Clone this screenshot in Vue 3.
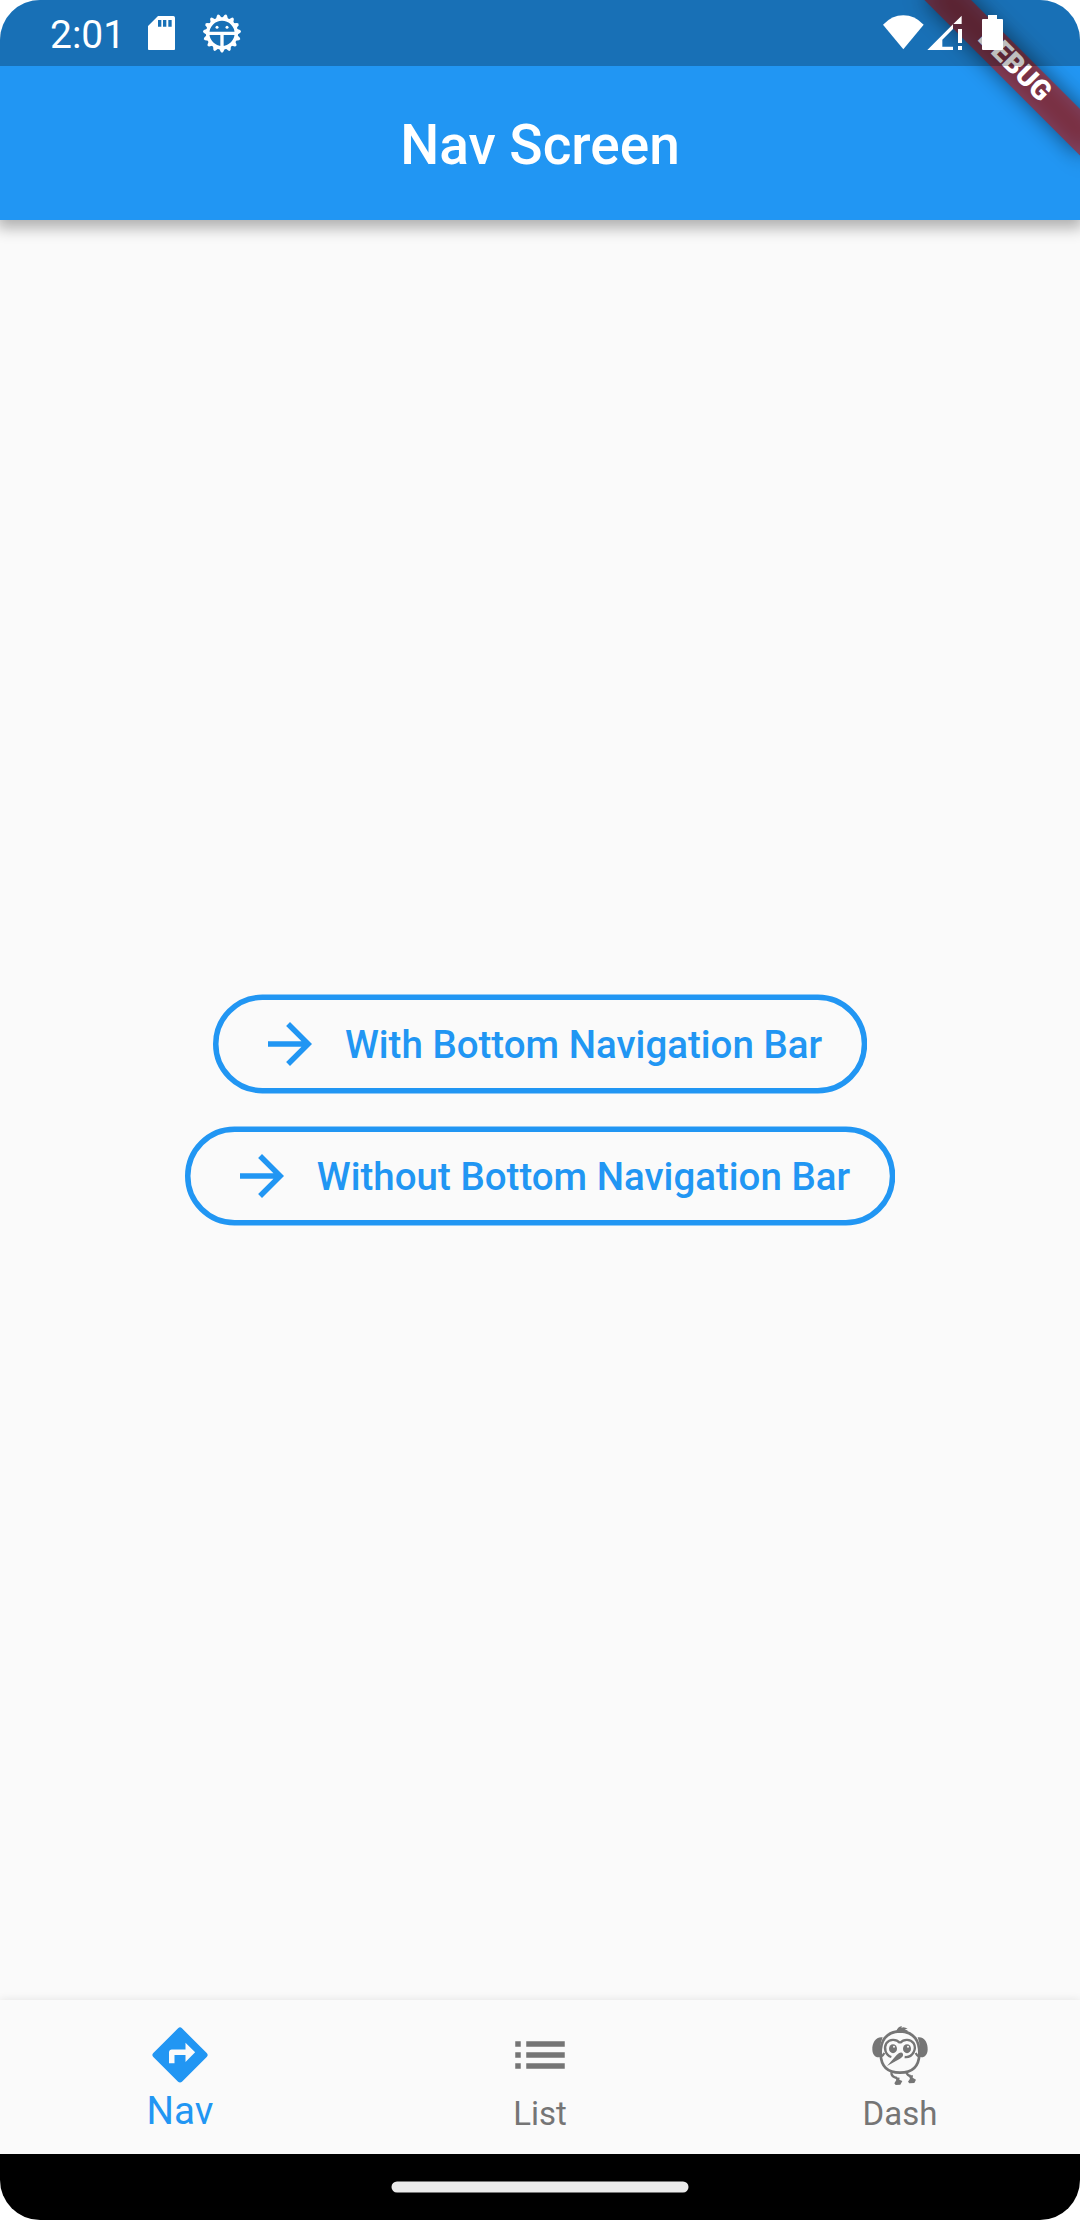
<script setup>
const actions = ['With Bottom Navigation Bar', 'Without Bottom Navigation Bar']
const teeth = Array.from({ length: 15 }, (_, i) => i * 24)
</script>

<template>
  <div class="phone">
    <header class="app-bar">
      <h1>Nav Screen</h1>
    </header>

    <main class="body">
      <button v-for="label in actions" :key="label" class="outlined">
        <svg class="outline"><rect x="2.75" y="3.25" rx="46.75" ry="46.75" /></svg>
        <svg class="arrow" viewBox="0 0 24 24">
          <path d="M12 4l-1.41 1.41L16.17 11H4v2h12.17l-5.58 5.59L12 20l8-8z" />
        </svg>
        <span>{{ label }}</span>
      </button>
    </main>

    <nav class="bottom-nav">
      <div class="item active">
        <svg viewBox="0 0 24 24">
          <path d="M21.71 11.29l-9-9a.996.996 0 0 0-1.41 0l-9 9a.996.996 0 0 0 0 1.41l9 9c.39.39 1.02.39 1.41 0l9-9a.996.996 0 0 0 0-1.41zM14 14.5V12h-4v3H8v-4c0-.55.45-1 1-1h5V7.500l3.500 3.500-3.500 3.500z" />
        </svg>
        <span>Nav</span>
      </div>
      <div class="item">
        <svg viewBox="0 0 24 24">
          <path d="M3 13h2v-2H3v2zm0 4h2v-2H3v2zm0-8h2V7H3v2zm4 4h14v-2H7v2zm0 4h14v-2H7v2zM7 7v2h14V7H7z" />
        </svg>
        <span>List</span>
      </div>
      <div class="item">
        <svg viewBox="51 36 198 198">
          <!-- tuft -->
          <path d="M138 66C142 54 148 49 156 49L154 54Q161 48 173 56L164 58L174 62L162 67Z" />
          <!-- wings -->
          <path d="M98 82C78 79 66 98 67 119C68 137 80 146 92 140C88 121 90 101 98 82Z" />
          <path d="M203 82C223 79 234 98 233 119C232 137 220 146 208 140C212 121 210 101 203 82Z" />
          <!-- head and body -->
          <path class="line" d="M92 132C91 95 106 65 150 64C194 65 209 95 208 132C207 168 188 188 150 188C113 188 93 168 92 132Z" />
          <path class="line thin" d="M95 138Q99 137 103 129M205 138Q201 137 197 129" />
          <path class="line thin" d="M150 99C138 86 119 87 109 100C100 115 107 136 124 141M150 99C162 86 181 87 191 100C200 115 190 144 164 141" />
          <ellipse cx="129" cy="116" rx="12" ry="13.500" />
          <ellipse cx="171" cy="116" rx="12" ry="13.500" />
          <circle cx="132" cy="110" r="3" class="glint" />
          <circle cx="174" cy="110" r="3" class="glint" />
          <!-- beak -->
          <path d="M111 168L140 135Q154 122 159 132Q161 140 150 146Z" />
          <!-- legs -->
          <path class="line thin" d="M124 187Q124 202 141 204M168 185Q172 197 182 198" />
          <path d="M135 201L149 203L148 209L157 213L151 224L137 225L133 220L139 210Z" />
          <path d="M175 196L189 196L188 203L198 209L193 219L178 220L174 215L180 206Z" />
        </svg>
        <span>Dash</span>
      </div>
    </nav>

    <footer class="gesture-bar">
      <svg width="298" height="12" viewBox="0 0 298 12">
        <rect x=".5" y=".5" width="297" height="11" rx="5.500" fill="#ebebeb" />
      </svg>
    </footer>

    <div class="ribbon">
      <div class="ribbon-shadow"></div>
      <div class="ribbon-band">DEBUG</div>
    </div>

    <div class="status-bar">
      <span class="time">2:01</span>
      <svg class="sd" viewBox="444 48 81 104">
        <path fill-rule="evenodd" d="M474 48H520Q525 48 525 53V146Q525 151 520 151H449Q444 151 444 146V78ZM474 60V80H484V60ZM489 60V80H499V60ZM505 60V80H515V60Z" />
      </svg>
      <svg class="gear" viewBox="607 39 120 120">
        <path v-for="a in teeth" :key="a" d="M658 145L663 155Q667 160 671 155L676 145Z" :transform="`rotate(${a} 667 100)`" />
        <circle cx="667" cy="100" r="43" />
        <path d="M628 95H706V105H672V140H662V105H628Z" />
        <circle class="eye" cx="652" cy="82" r="4.500" />
        <circle class="eye" cx="682" cy="82" r="4.500" />
      </svg>
      <svg class="signals" viewBox="69 42 363 111">
        <path d="M69 74Q96 46 130 46Q164 46 191 74L130 148Z" />
        <path d="M305 47V72H280ZM202 150L279 73V87L247 119V140H279V150ZM294 87H306V129H294ZM294 138H306V150H294Z" />
        <path d="M384 45H411V57H426Q429 57 429 60V147Q429 150 426 150H369Q366 150 366 147V60Q366 57 369 57H384Z" />
      </svg>
    </div>
  </div>
</template>

<style>
body {
  margin: 0;
  background: #fff;
}
</style>

<style scoped>
.phone {
  position: relative;
  display: flex;
  flex-direction: column;
  width: 1080px;
  height: 2220px;
  border-radius: 40px;
  overflow: hidden;
  background: #fafafa;
  font-family: Roboto, sans-serif;
}
.app-bar {
  position: relative;
  display: flex;
  align-items: center;
  justify-content: center;
  box-sizing: border-box;
  height: 220px;
  padding-top: 70px;
  background: #2196f3;
  box-shadow: 0 5px 14px 3px rgba(0, 0, 0, 0.3);
}
h1 {
  margin: 0;
  color: #fff;
  font-size: 55px;
  font-weight: 500;
  line-height: 64px;
}
.body {
  flex: 1;
  display: flex;
  flex-direction: column;
  align-items: center;
  justify-content: center;
  gap: 32px;
}
.outlined {
  position: relative;
  display: flex;
  align-items: center;
  gap: 22px;
  height: 100px;
  padding: 0 45px 0 44px;
  border: 0;
  background: none;
  color: #2196f3;
  font: 500 38.5px/46px Roboto, sans-serif;
}
.outlined span {
  padding-top: 2px;
}
.outline {
  position: absolute;
  inset: 0;
  width: 100%;
  height: 100%;
}
.outline rect {
  width: calc(100% - 5.5px);
  height: 93.5px;
  fill: none;
  stroke: #2196f3;
  stroke-width: 5.5px;
}
.arrow {
  width: 66px;
  height: 66px;
  fill: currentColor;
}
.bottom-nav {
  display: flex;
  height: 154px;
  background: #fafafa;
  box-shadow: 0 -1px 8px rgba(0, 0, 0, 0.08);
}
.item {
  flex: 1;
  display: flex;
  flex-direction: column;
  align-items: center;
  padding-top: 22px;
  color: #757575;
  font-size: 33px;
  line-height: 51px;
}
.item svg {
  width: 66px;
  height: 66px;
  fill: currentColor;
}
.item.active {
  color: #2196f3;
  font-size: 38.5px;
  line-height: 45px;
}
.item .line {
  fill: none;
  stroke: currentColor;
  stroke-width: 8;
}
.item .thin {
  stroke-width: 7;
}
.glint {
  fill: #fafafa;
}
.gesture-bar {
  position: relative;
  display: flex;
  justify-content: center;
  align-items: center;
  height: 66px;
  background: #000;
}
.ribbon {
  position: absolute;
  left: 1080px;
  top: 0;
  width: 0;
  height: 0;
  transform: rotate(45deg);
}
.ribbon-shadow,
.ribbon-band {
  position: absolute;
  left: -110px;
  top: 77px;
  width: 220px;
  height: 33px;
}
.ribbon-shadow {
  background: rgba(0, 0, 0, 0.5);
  filter: blur(10.9px);
}
.ribbon-band {
  background: rgba(183, 28, 28, 0.627);
  color: #fff;
  font-size: 28.05px;
  font-weight: 900;
  line-height: 30px;
  text-align: center;
}
.status-bar {
  position: absolute;
  inset: 0 0 auto 0;
  display: flex;
  align-items: center;
  height: 66px;
  background: rgba(0, 0, 0, 0.25);
  color: #fff;
}
.status-bar svg {
  fill: #fff;
}
.time {
  width: 98px;
  padding: 4px 0 0 50px;
  font-size: 39px;
  line-height: 46px;
}
.sd {
  width: 27px;
  height: 34.67px;
}
.gear {
  width: 40px;
  height: 40px;
  margin-left: 27.3px;
}
.gear circle {
  fill: none;
  stroke: #fff;
  stroke-width: 10.5;
}
.gear .eye {
  fill: #fff;
  stroke: none;
}
.signals {
  width: 121px;
  height: 37px;
  margin: 0 76px 1px auto;
}
</style>
